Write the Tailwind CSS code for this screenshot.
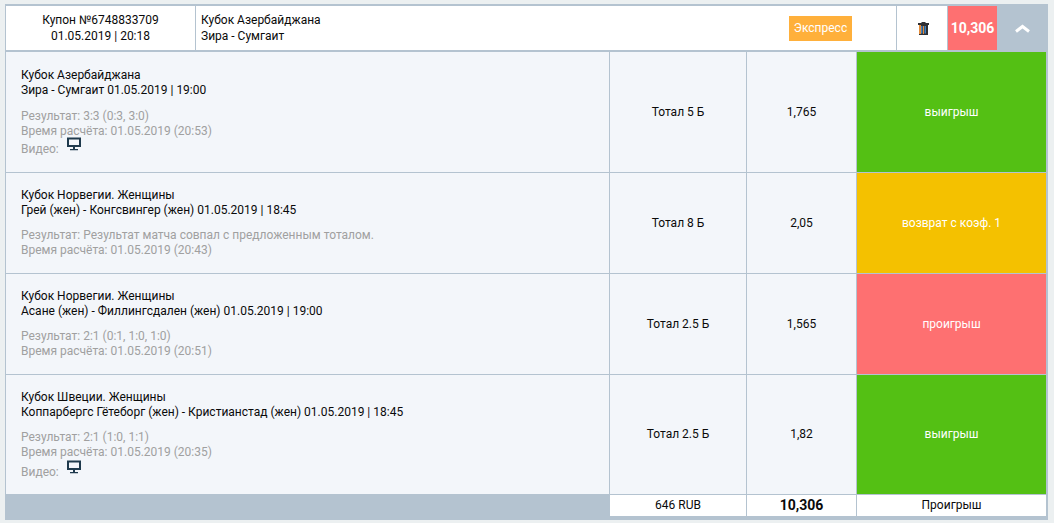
<!DOCTYPE html>
<html><head><meta charset="utf-8"><script src="https://cdn.jsdelivr.net/npm/@tailwindcss/browser@4"></script></head>
<body class="w-[1054px] h-[523px] overflow-hidden bg-[#ecf0f1] font-['Roboto',sans-serif] text-[12px] leading-[15px] text-[#0a0a0a]">
<div class="ml-[5px] mt-[4px] w-[1043px] h-[516px] bg-[#b4c3d0] flex flex-col pt-[2px] pb-[4px]">
  <div class="flex h-[44px] shrink-0 ml-[1px] bg-white">
    <div class="w-[190px] flex flex-col justify-center items-center border-r border-[#b4c3d0]"><div>Купон №6748833709</div><div class="mt-[1px]">01.05.2019 | 20:18</div></div>
    <div class="w-[593px] pl-[5px] flex flex-col justify-center"><div>Кубок Азербайджана</div><div class="mt-[1px]">Зира - Сумгаит</div></div>
    <div class="w-[107px] flex items-center"><span class="w-[63px] h-[25px] bg-[#ffb03b] text-white flex items-center justify-center">Экспресс</span></div>
    <div class="w-[51px] flex items-center justify-center border-l border-[#b4c3d0]"><svg class="ml-[2px] mt-[1px]" width="11" height="13" viewBox="0 0 11 13"><path d="M3.500 1V0H7.500V1Z M0 1H11V3H0Z" fill="#2f2f33"/><path d="M1 3H10V13H1Z" fill="#2f2f33"/><path d="M1 3H3V12H1Z M5 4H6V12H5Z" fill="#e58c3a"/><path d="M3 4H4.500V11.500H3Z M6.500 4H8V11.500H6.500Z" fill="#3f82c4"/></svg></div>
    <div class="w-[50px] bg-[#fe7071] border-l border-[#b4c3d0] text-white font-bold text-[14px] flex items-center justify-center">10,306</div>
    <div class="flex-1 bg-[#b4c3d0] flex items-center justify-center"><svg width="15" height="9" viewBox="0 0 15 9"><path d="M1 7.500L7.500 2.500L14 7.500" fill="none" stroke="#fff" stroke-width="3"/></svg></div>
  </div>
  <div class="mt-[2px] ml-[1px] mr-[2px] grid grid-cols-[604px_137px_110px_189px] grid-rows-[121px_101px_101px_119px_22px] bg-[#f3f6fa] flex-1">
    <div class="pt-[16px] pl-[15px] border-r border-b border-[#b4c3d0]"><div>Кубок Азербайджана</div><div>Зира - Сумгаит 01.05.2019 | 19:00</div><div class="mt-[11px] text-[#a0a0a0]">Результат: 3:3 (0:3, 3:0)</div><div class="text-[#a0a0a0]">Время расчёта: 01.05.2019 (20:53)</div><div class="text-[#a0a0a0] flex"><span class="mt-[3px]">Видео:</span><svg class="ml-[8px] mt-[-2px]" width="14" height="14" viewBox="0 0 14 14"><path d="M0 0.500H14V10H0Z M2 2.500V8H12V2.500Z" fill="#1f3a4d" fill-rule="evenodd"/><path d="M6 10H8V12H6Z M3 12H11V13.300H3Z" fill="#1f3a4d"/></svg></div></div>
    <div class="flex items-center justify-center border-r border-b border-[#b4c3d0]">Тотал 5 Б</div>
    <div class="flex items-center justify-center border-r border-b border-[#b4c3d0]">1,765</div>
    <div class="flex items-center justify-center bg-[#54c014] text-white border-b border-[#b4c3d0]">выигрыш</div>

    <div class="pt-[15px] pl-[15px] border-r border-b border-[#b4c3d0]"><div>Кубок Норвегии. Женщины</div><div>Грей (жен) - Конгсвингер (жен) 01.05.2019 | 18:45</div><div class="mt-[10px] text-[#a0a0a0]">Результат: Результат матча совпал с предложенным тоталом.</div><div class="text-[#a0a0a0]">Время расчёта: 01.05.2019 (20:43)</div></div>
    <div class="flex items-center justify-center border-r border-b border-[#b4c3d0]">Тотал 8 Б</div>
    <div class="flex items-center justify-center border-r border-b border-[#b4c3d0]">2,05</div>
    <div class="flex items-center justify-center bg-[#f4c100] text-white border-b border-[#b4c3d0]">возврат с коэф. 1</div>

    <div class="pt-[15px] pl-[15px] border-r border-b border-[#b4c3d0]"><div>Кубок Норвегии. Женщины</div><div>Асане (жен) - Филлингсдален (жен) 01.05.2019 | 19:00</div><div class="mt-[10px] text-[#a0a0a0]">Результат: 2:1 (0:1, 1:0, 1:0)</div><div class="text-[#a0a0a0]">Время расчёта: 01.05.2019 (20:51)</div></div>
    <div class="flex items-center justify-center border-r border-b border-[#b4c3d0]">Тотал 2.5 Б</div>
    <div class="flex items-center justify-center border-r border-b border-[#b4c3d0]">1,565</div>
    <div class="flex items-center justify-center bg-[#fe7071] text-white border-b border-[#b4c3d0]">проигрыш</div>

    <div class="pt-[15px] pl-[15px] border-r border-[#b4c3d0]"><div>Кубок Швеции. Женщины</div><div>Коппарбергс Гётеборг (жен) - Кристианстад (жен) 01.05.2019 | 18:45</div><div class="mt-[10px] text-[#a0a0a0]">Результат: 2:1 (1:0, 1:1)</div><div class="text-[#a0a0a0]">Время расчёта: 01.05.2019 (20:35)</div><div class="text-[#a0a0a0] flex"><span class="mt-[5px]">Видео:</span><svg class="ml-[8px]" width="14" height="14" viewBox="0 0 14 14"><path d="M0 0.500H14V10H0Z M2 2.500V8H12V2.500Z" fill="#1f3a4d" fill-rule="evenodd"/><path d="M6 10H8V12H6Z M3 12H11V13.300H3Z" fill="#1f3a4d"/></svg></div></div>
    <div class="flex items-center justify-center border-r border-[#b4c3d0]">Тотал 2.5 Б</div>
    <div class="flex items-center justify-center border-r border-[#b4c3d0]">1,82</div>
    <div class="flex items-center justify-center bg-[#54c014] text-white">выигрыш</div>

    <div class="bg-[#b4c3d0]"></div>
    <div class="bg-white flex items-center justify-center border-t border-r border-[#b4c3d0]">646 RUB</div>
    <div class="bg-white flex items-center justify-center border-t border-r border-[#b4c3d0] font-bold text-[14px]">10,306</div>
    <div class="bg-white flex items-center justify-center border-t border-[#b4c3d0]">Проигрыш</div>
  </div>
</div>
</body></html>
